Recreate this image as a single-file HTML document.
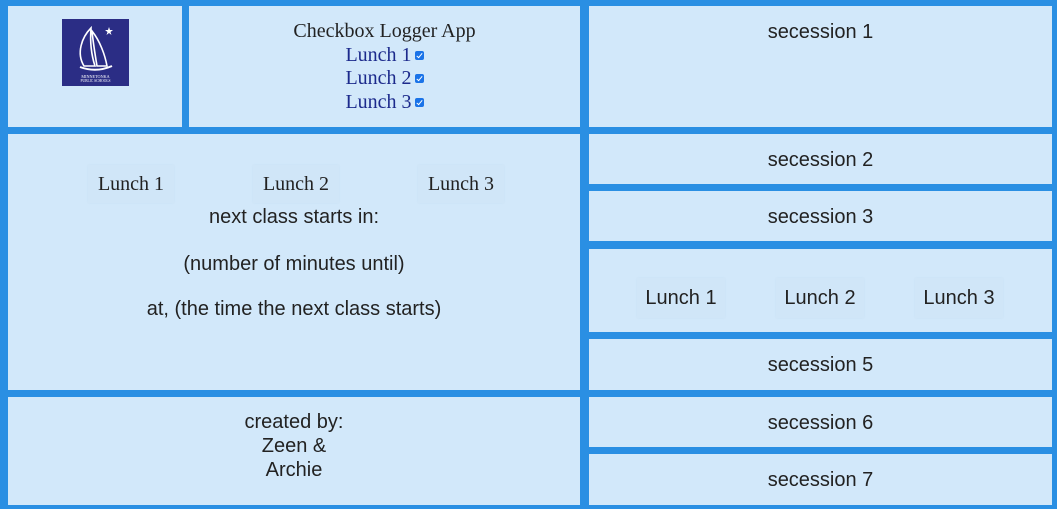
<!DOCTYPE html>
<html><head><style>
body{margin:0;width:1057px;height:509px;background:#2a8fe3;position:relative;overflow:hidden;font-family:"Liberation Sans",sans-serif;color:#222}
.p{position:absolute;background:#d2e8fa;text-align:center;box-sizing:border-box}
.s{font-size:20px;padding-top:15px}
.serif{font-family:"Liberation Serif",serif}
.cb{display:inline-block;width:9px;height:9px;background:#1a73e8;border-radius:2px;vertical-align:1px;margin-left:3px;position:relative}
.cb:after{content:"";position:absolute;left:3px;top:1px;width:2px;height:5px;border:solid #fff;border-width:0 1.5px 1.5px 0;transform:rotate(40deg)}
.btn{position:absolute;background:#d0e6f8;box-shadow:0 0 2px #c9e0f2}
</style></head><body>
<div class="p" style="left:8px;top:6px;width:174px;height:121px">
 <div style="position:absolute;left:54px;top:13px;width:67px;height:67px;background:#2b2d85">
  <svg width="67" height="67" viewBox="0 0 67 67"><path d="M22 47 C14 34 20 18 29 9 C28 22 29 35 33 47 Z M30 12 C38 22 43 36 45 47 L35 47 C33 35 31 22 30 12Z" fill="none" stroke="#fff" stroke-width="1.6"/><path d="M18 48 Q34 54 50 47" fill="none" stroke="#fff" stroke-width="2"/><path d="M47 8 l1 3 3 0 -2.5 2 1 3 -2.5-2 -2.5 2 1-3 -2.5-2 3 0z" fill="#fff"/><text x="33.5" y="59" font-size="4.2" fill="#fff" text-anchor="middle" font-family="Liberation Serif">MINNETONKA</text><text x="33.5" y="63" font-size="3.6" fill="#fff" text-anchor="middle" font-family="Liberation Serif">PUBLIC SCHOOLS</text></svg>
 </div>
</div>
<div class="p serif" style="left:189px;top:6px;width:391px;height:121px;padding-top:14px;font-size:20px;line-height:23.5px">
 <div>Checkbox Logger App</div>
 <div style="color:#1c2a8c">Lunch 1<span class="cb"></span></div>
 <div style="color:#1c2a8c">Lunch 2<span class="cb"></span></div>
 <div style="color:#1c2a8c">Lunch 3<span class="cb"></span></div>
</div>
<div class="p s" style="left:589px;top:6px;width:463px;height:121px">secession 1</div>
<div class="p" style="left:8px;top:134px;width:572px;height:256px;font-size:20px">
 <div class="btn serif" style="left:80px;top:31px;width:86px;height:38px;line-height:38px">Lunch 1</div>
 <div class="btn serif" style="left:245px;top:31px;width:86px;height:38px;line-height:38px">Lunch 2</div>
 <div class="btn serif" style="left:410px;top:31px;width:86px;height:38px;line-height:38px">Lunch 3</div>
 <div style="position:absolute;left:0;right:0;top:72px">next class starts in:</div>
 <div style="position:absolute;left:0;right:0;top:119px">(number of minutes until)</div>
 <div style="position:absolute;left:0;right:0;top:164px">at, (the time the next class starts)</div>
</div>
<div class="p s" style="left:589px;top:134px;width:463px;height:50px">secession 2</div>
<div class="p s" style="left:589px;top:191px;width:463px;height:50px">secession 3</div>
<div class="p" style="left:589px;top:249px;width:463px;height:83px;font-size:20px">
 <div class="btn" style="left:48px;top:29px;width:88px;height:40px;line-height:40px">Lunch 1</div>
 <div class="btn" style="left:187px;top:29px;width:88px;height:40px;line-height:40px">Lunch 2</div>
 <div class="btn" style="left:326px;top:29px;width:88px;height:40px;line-height:40px">Lunch 3</div>
</div>
<div class="p s" style="left:589px;top:339px;width:463px;height:51px">secession 5</div>
<div class="p" style="left:8px;top:397px;width:572px;height:108px;font-size:20px;line-height:24px;padding-top:13px">created by:<br>Zeen &amp;<br>Archie</div>
<div class="p s" style="left:589px;top:397px;width:463px;height:50px">secession 6</div>
<div class="p s" style="left:589px;top:454px;width:463px;height:51px;padding-top:15px">secession 7</div>
</body></html>
